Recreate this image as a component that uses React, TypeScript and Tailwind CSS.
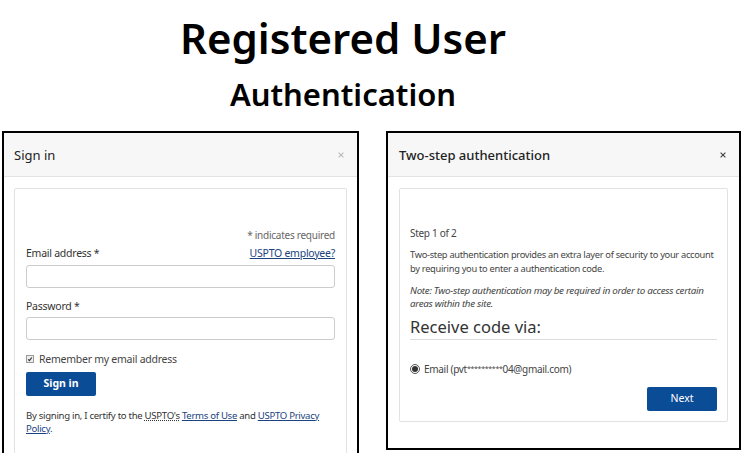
import React from 'react';

const CloseX: React.FC<{ className?: string }> = ({ className }) => (
    <svg viewBox="0 0 10 10" className={className} fill="none" stroke="currentColor" strokeWidth="1.4">
        <path d="M2 2l6 6M8 2l-6 6" />
    </svg>
);

const SignInPanel: React.FC = () => (
    <div className="w-[357px] h-[330px] border-2 border-b-0 border-black bg-white shrink-0">
        {/* Header */}
        <div className="h-[44px] flex items-center justify-between pl-[10px] pr-[12px] bg-[#f7f7f8] border-b border-[#e3e3e3]">
            <span className="text-[13px] text-[#222] mt-[2px]">Sign in</span>
            <CloseX className="w-[8px] h-[8px] text-[#bbb]" />
        </div>

        <div className="pt-[11px] px-[10px]">
            <div className="border border-[#e2e2e2] rounded-[2px] px-[11px] pt-[39px] h-[280px] tracking-[-0.25px]">
                <p className="text-right text-[10px] text-[#666] leading-[14px]">* indicates required</p>

                <div className="mt-[4px] flex items-center justify-between leading-[14px]">
                    <span className="text-[10.5px] text-[#333]">Email address *</span>
                    <a href="#" className="text-[10.5px] text-[#1a4480] underline">USPTO employee?</a>
                </div>
                <input className="mt-[5px] w-full h-[23px] border border-[#ccc] rounded-[3px] block" />

                <div className="mt-[11px] text-[10.5px] text-[#333] leading-[14px]">Password *</div>
                <input type="password" className="mt-[4px] w-full h-[23px] border border-[#ccc] rounded-[3px] block" />

                <label className="mt-[12px] flex items-center gap-[5px] leading-[14px]">
                    <span className="w-[8px] h-[8px] border border-[#999] bg-[#eee] flex items-center justify-center">
                        <svg viewBox="0 0 10 10" className="w-[8px] h-[8px]" fill="none" stroke="#333" strokeWidth="2">
                            <path d="M2 5.5l2 2 4-5" />
                        </svg>
                    </span>
                    <span className="text-[10.5px] text-[#444]">Remember my email address</span>
                </label>

                <button className="mt-[6px] w-[70px] h-[24px] bg-[#0b4c96] text-white text-[10.5px] font-bold rounded-[2px] block tracking-normal">
                    Sign in
                </button>

                <p className="mt-[13px] text-[9.6px] text-[#333] leading-[13px] tracking-[-0.3px]">
                    By signing in, I certify to the <span className="underline decoration-dotted">USPTO's</span>{' '}
                    <a href="#" className="text-[#1a4480] underline">Terms of Use</a> and{' '}
                    <a href="#" className="text-[#1a4480] underline">USPTO Privacy Policy</a>.
                </p>
            </div>
        </div>
    </div>
);

const TwoStepPanel: React.FC = () => (
    <div className="w-[355px] h-[319px] border-2 border-black bg-white shrink-0">
        {/* Header */}
        <div className="h-[44px] flex items-center justify-between pl-[11px] pr-[12px] bg-[#f7f7f8] border-b border-[#e3e3e3]">
            <span className="text-[13px] text-[#222] font-medium mt-[2px]">Two-step authentication</span>
            <CloseX className="w-[8px] h-[8px] text-[#444]" />
        </div>

        <div className="pt-[11px] px-[11px]">
            <div className="border border-[#e2e2e2] rounded-[2px] pl-[10px] pr-[9px] pt-[37px] h-[234px] tracking-[-0.3px]">
                <p className="text-[10px] text-[#444] leading-[14px]">Step 1 of 2</p>
                <p className="mt-[8px] text-[9.3px] text-[#444] leading-[14px]">
                    Two-step authentication provides an extra layer of security to your account by requiring you to enter a authentication code.
                </p>
                <p className="mt-[8px] text-[9.8px] text-[#444] italic leading-[13px]">
                    Note: Two-step authentication may be required in order to access certain areas within the site.
                </p>
                <div className="mt-[6px] mr-[1px] pb-[2px] border-b border-[#ddd] text-[16.5px] text-[#333] leading-[21px] tracking-normal">
                    Receive code via:
                </div>
                <label className="mt-[22px] flex items-center gap-[4px] leading-[14px]">
                    <span className="w-[10px] h-[10px] rounded-full border border-[#555] flex items-center justify-center">
                        <span className="w-[6px] h-[6px] rounded-full bg-[#333]" />
                    </span>
                    <span className="text-[10px] text-[#444]">Email (pvt<span className="text-[7px] align-top">**********</span>04@gmail.com)</span>
                </label>
                <div className="mt-[11px] mr-[1px] flex justify-end">
                    <button className="w-[70px] h-[24px] bg-[#0b4c96] text-white text-[10.5px] rounded-[2px] tracking-normal">Next</button>
                </div>
            </div>
        </div>
    </div>
);

const App: React.FC = () => {
    return (
        <div className="w-[743px] h-[453px] overflow-hidden bg-white font-['Noto_Sans',sans-serif]">
            {/* Titles */}
            <div className="w-[686px] flex flex-col items-center pt-[13px]">
                <h1 className="text-[42px] font-semibold leading-[50px] text-black">Registered User</h1>
                <h2 className="mt-[12px] text-[31px] font-semibold leading-[38px] text-black">Authentication</h2>
            </div>

            {/* Panels */}
            <div className="mt-[18px] flex items-start gap-[27px] pl-[2px]">
                <SignInPanel />
                <TwoStepPanel />
            </div>
        </div>
    );
};

export default App;
